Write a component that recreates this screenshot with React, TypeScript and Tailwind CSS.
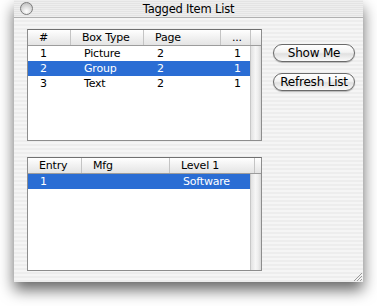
import React from 'react';

const font = { fontFamily: '"Lucida Grande", "DejaVu Sans", sans-serif' };

interface Col {
  label: string;
  width: number;
}

const topCols: Col[] = [
  { label: '#', width: 43 },
  { label: 'Box Type', width: 73 },
  { label: 'Page', width: 77 },
  { label: '...', width: 30 },
];

const topRows = [
  ['1', 'Picture', '2', '1'],
  ['2', 'Group', '2', '1'],
  ['3', 'Text', '2', '1'],
];

const bottomCols: Col[] = [
  { label: 'Entry', width: 54 },
  { label: 'Mfg', width: 88 },
  { label: 'Level 1', width: 85 },
];

const bottomRows = [['1', '', 'Software']];

// Aqua style list with header and an empty scroll track on the right
const ListTable: React.FC<{ cols: Col[]; rows: string[][]; selected: number; height: number; headerTail: number }> = ({ cols, rows, selected, height, headerTail }) => {
  return (
    <div
      className="w-[235px] border border-[#8d8d8d] border-t-[#707070] bg-white flex flex-col overflow-hidden"
      style={{ height }}
    >
      {/* Header */}
      <div className="h-[16px] flex shrink-0 border-b border-[#9c9c9c] bg-[linear-gradient(to_bottom,#ffffff,#f1f1f1_50%,#e4e4e4)]">
        {cols.map((c, i) => (
          <div
            key={i}
            className="h-full shrink-0 border-r border-[#c4c4c4] pl-[11px] text-[11px] tracking-[-0.2px] leading-[15px] text-black whitespace-nowrap"
            style={{ width: c.width }}
          >
            {c.label}
          </div>
        ))}
        <div className="h-full" style={{ width: headerTail }}></div>
      </div>
      <div className="flex-1 flex min-h-0">
        {/* Rows */}
        <div className="flex-1 min-w-0 overflow-hidden flex flex-col">
          {rows.map((r, ri) => (
            <div
              key={ri}
              className={`h-[15px] flex ${ri === selected ? 'bg-[#2a6dd4] text-white' : 'text-black'}`}
            >
              {r.map((cell, ci) => (
                <div
                  key={ci}
                  className="shrink-0 pl-[12px] text-[11px] tracking-[-0.2px] leading-[15px] whitespace-nowrap"
                  style={{ width: cols[ci].width + (ci === 0 ? 1 : 0) }}
                >
                  {cell}
                </div>
              ))}
            </div>
          ))}
        </div>
        {/* Scroll track */}
        <div className="w-[11px] shrink-0 border-l border-[#c8c8c8] bg-[linear-gradient(to_right,#e2e2e2,#f6f6f6_45%,#eeeeee_70%,#d9d9d9)]"></div>
      </div>
    </div>
  );
};

const AquaButton: React.FC<{ label: string }> = ({ label }) => (
  <button className="w-[82px] h-[18px] rounded-full border border-[#6a6a6a] bg-[linear-gradient(to_bottom,#ffffff,#f3f3f3_45%,#e0e0e0_55%,#fafafa)] shadow-[0_1px_1px_rgba(0,0,0,0.25)] text-[12px] tracking-[-0.2px] leading-[16px] text-black">
    {label}
  </button>
);

export default function App() {
  return (
    <div className="w-[377px] h-[306px] bg-white overflow-hidden" style={font}>
      <div className="ml-[14px] w-[349px] h-[282px] flex flex-col shadow-[0_8px_14px_rgba(0,0,0,0.6)] bg-[repeating-linear-gradient(to_bottom,#ededed_0px,#ededed_2px,#f5f5f5_2px,#f5f5f5_4px)]">
        {/* Title bar */}
        <div className="h-[18px] shrink-0 flex items-center relative border-b border-[#b0b0b0] bg-[repeating-linear-gradient(to_bottom,#eeeeee_0px,#eeeeee_1px,#e4e4e4_1px,#e4e4e4_2px)]">
          <div className="ml-[6px] w-[13px] h-[13px] rounded-full border border-[#7c7c7c] bg-[radial-gradient(circle_at_50%_75%,#ffffff,#d4d4d4_60%,#b4b4b4)]"></div>
          <div className="flex-1 text-center text-[11.5px] tracking-[-0.2px] leading-[16px] text-black pr-[19px]">Tagged Item List</div>
        </div>

        {/* Content */}
        <div className="flex-1 flex flex-col pl-[13px] pt-[11px] relative">
          <div className="flex">
            <ListTable cols={topCols} rows={topRows} selected={1} height={112} headerTail={11} />
            <div className="ml-[11px] pt-[15px] flex flex-col gap-[11px]">
              <AquaButton label="Show Me" />
              <AquaButton label="Refresh List" />
            </div>
          </div>
          <div className="mt-[16px]">
            <ListTable cols={bottomCols} rows={bottomRows} selected={0} height={114} headerTail={6} />
          </div>

          {/* Resize grip */}
          <svg className="absolute right-[1px] bottom-[1px]" width="10" height="10" viewBox="0 0 10 10">
            <line x1="2" y1="10" x2="10" y2="2" stroke="#9a9a9a" strokeWidth="1" />
            <line x1="5" y1="10" x2="10" y2="5" stroke="#9a9a9a" strokeWidth="1" />
            <line x1="8" y1="10" x2="10" y2="8" stroke="#9a9a9a" strokeWidth="1" />
          </svg>
        </div>
      </div>
    </div>
  );
}
